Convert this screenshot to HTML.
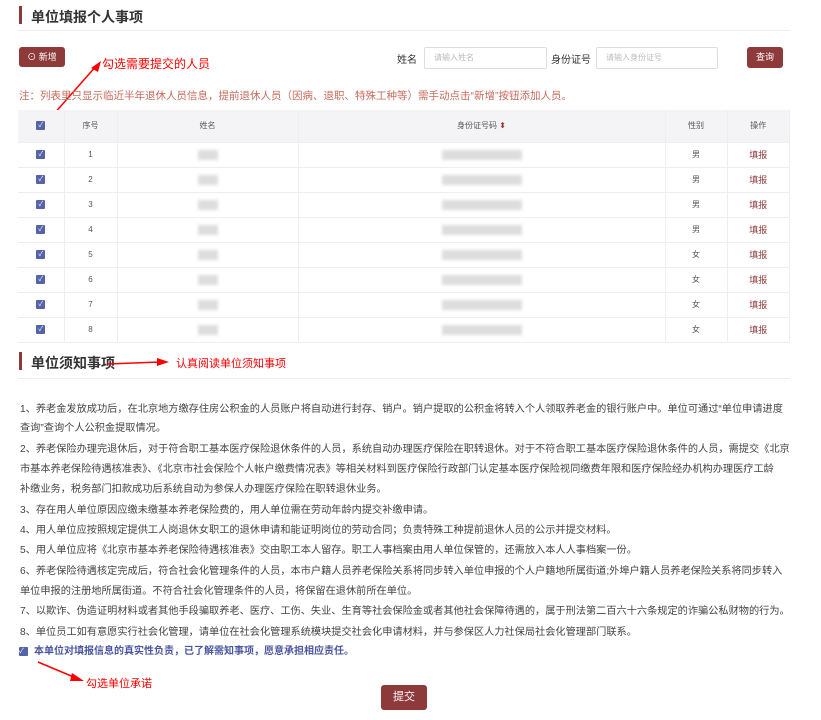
<!DOCTYPE html>
<html><head><meta charset="utf-8"><style>
*{margin:0;padding:0;box-sizing:border-box}
body{width:821px;height:720px;background:#fff;font-family:"Liberation Sans","Noto Sans CJK SC",sans-serif;color:#333;position:relative;overflow:hidden}
.abs{position:absolute;white-space:nowrap}
.bar{position:absolute;width:3px;height:18px;background:#8c3a3a}
.h{font-size:14px;font-weight:bold;color:#333}
.hr{position:absolute;left:18px;width:772px;height:1px;background:#eee}
.btn{position:absolute;background:#8f3a3a;color:#fff;border-radius:3px;font-size:9px;text-align:center}
.inp{position:absolute;border:1px solid #ddd;border-radius:2px;font-size:8px;color:#bbb;padding-left:9px;line-height:20px;height:22px}
.red{color:#f00;font-size:12px}
table{position:absolute;left:18px;top:110px;width:772px;border-collapse:collapse;font-size:8px;color:#555}
td,th{border-bottom:1px solid #eee;border-right:1px solid #eee;text-align:center;height:25px;font-weight:normal}
th{background:#f4f4f6;height:32px}
.cb{display:inline-block;width:9px;height:9px;background:#5563a8;border-radius:1px;color:#fff;font-size:7px;line-height:9px;vertical-align:middle}
.blur{display:inline-block;height:10px;background:#ddd;filter:blur(1.5px);vertical-align:middle}
.op{color:#8f3a3a;font-size:9px}
.n{position:absolute;left:20px;font-size:10.2px;color:#444;white-space:nowrap}
</style></head><body>
<div class="bar" style="left:19px;top:6px"></div>
<div class="abs h" style="left:31px;top:7px">单位填报个人事项</div>
<div class="hr" style="top:30px"></div>
<div class="btn" style="left:19px;top:47px;width:46px;height:20px;line-height:20px">⊙ 新增</div>
<div class="abs red" style="left:102px;top:55px">勾选需要提交的人员</div>
<svg class="abs" style="left:45px;top:60px" width="60" height="120"><line x1="52" y1="5" x2="8" y2="55" stroke="#f00" stroke-width="1.5"/><polygon points="56,1 46,8 53,12" fill="#f00"/></svg>
<div class="abs" style="left:397px;top:51px;font-size:10px">姓名</div>
<div class="inp" style="left:424px;top:47px;width:123px">请输入姓名</div>
<div class="abs" style="left:551px;top:51px;font-size:10px">身份证号</div>
<div class="inp" style="left:596px;top:47px;width:122px">请输入身份证号</div>
<div class="btn" style="left:747px;top:47px;width:36px;height:21px;line-height:21px">查询</div>
<div class="abs" style="left:19px;top:88px;font-size:10.5px;color:#c86b5a">注：列表里只显示临近半年退休人员信息，提前退休人员（因病、退职、特殊工种等）需手动点击“新增”按钮添加人员。</div>
<table>
<tr><th style="width:46px"><span class="cb">✓</span></th><th style="width:53px">序号</th><th style="width:181px">姓名</th><th style="width:367px">身份证号码 <span style="color:#8f3a3a">⬍</span></th><th style="width:62px">性别</th><th>操作</th></tr>
<tr><td><span class="cb">✓</span></td><td>1</td><td><span class="blur" style="width:20px"></span></td><td><span class="blur" style="width:80px"></span></td><td>男</td><td class="op">填报</td></tr>
<tr><td><span class="cb">✓</span></td><td>2</td><td><span class="blur" style="width:20px"></span></td><td><span class="blur" style="width:80px"></span></td><td>男</td><td class="op">填报</td></tr>
<tr><td><span class="cb">✓</span></td><td>3</td><td><span class="blur" style="width:20px"></span></td><td><span class="blur" style="width:80px"></span></td><td>男</td><td class="op">填报</td></tr>
<tr><td><span class="cb">✓</span></td><td>4</td><td><span class="blur" style="width:20px"></span></td><td><span class="blur" style="width:80px"></span></td><td>男</td><td class="op">填报</td></tr>
<tr><td><span class="cb">✓</span></td><td>5</td><td><span class="blur" style="width:20px"></span></td><td><span class="blur" style="width:80px"></span></td><td>女</td><td class="op">填报</td></tr>
<tr><td><span class="cb">✓</span></td><td>6</td><td><span class="blur" style="width:20px"></span></td><td><span class="blur" style="width:80px"></span></td><td>女</td><td class="op">填报</td></tr>
<tr><td><span class="cb">✓</span></td><td>7</td><td><span class="blur" style="width:20px"></span></td><td><span class="blur" style="width:80px"></span></td><td>女</td><td class="op">填报</td></tr>
<tr><td><span class="cb">✓</span></td><td>8</td><td><span class="blur" style="width:20px"></span></td><td><span class="blur" style="width:80px"></span></td><td>女</td><td class="op">填报</td></tr>
</table>
<div class="bar" style="left:19px;top:352px"></div>
<div class="abs h" style="left:31px;top:353px">单位须知事项</div>
<svg class="abs" style="left:105px;top:356px" width="65" height="14"><line x1="2" y1="8" x2="55" y2="6" stroke="#f00" stroke-width="1.5"/><polygon points="64,6 52,2 52,10" fill="#f00"/></svg>
<div class="abs red" style="left:176px;top:355px;font-size:11px">认真阅读单位须知事项</div>
<div class="hr" style="top:378px"></div>
<div class="n" style="top:400px">1、养老金发放成功后，在北京地方缴存住房公积金的人员账户将自动进行封存、销户。销户提取的公积金将转入个人领取养老金的银行账户中。单位可通过“单位申请进度</div>
<div class="n" style="top:419px">查询”查询个人公积金提取情况。</div>
<div class="n" style="top:440px">2、养老保险办理完退休后，对于符合职工基本医疗保险退休条件的人员，系统自动办理医疗保险在职转退休。对于不符合职工基本医疗保险退休条件的人员，需提交《北京</div>
<div class="n" style="top:460px">市基本养老保险待遇核准表》、《北京市社会保险个人帐户缴费情况表》等相关材料到医疗保险行政部门认定基本医疗保险视同缴费年限和医疗保险经办机构办理医疗工龄</div>
<div class="n" style="top:480px">补缴业务，税务部门扣款成功后系统自动为参保人办理医疗保险在职转退休业务。</div>
<div class="n" style="top:501px">3、存在用人单位原因应缴未缴基本养老保险费的，用人单位需在劳动年龄内提交补缴申请。</div>
<div class="n" style="top:521px">4、用人单位应按照规定提供工人岗退休女职工的退休申请和能证明岗位的劳动合同；负责特殊工种提前退休人员的公示并提交材料。</div>
<div class="n" style="top:541px">5、用人单位应将《北京市基本养老保险待遇核准表》交由职工本人留存。职工人事档案由用人单位保管的，还需放入本人人事档案一份。</div>
<div class="n" style="top:562px">6、养老保险待遇核定完成后，符合社会化管理条件的人员，本市户籍人员养老保险关系将同步转入单位申报的个人户籍地所属街道;外埠户籍人员养老保险关系将同步转入</div>
<div class="n" style="top:582px">单位申报的注册地所属街道。不符合社会化管理条件的人员，将保留在退休前所在单位。</div>
<div class="n" style="top:602px">7、以欺诈、伪造证明材料或者其他手段骗取养老、医疗、工伤、失业、生育等社会保险金或者其他社会保障待遇的，属于刑法第二百六十六条规定的诈骗公私财物的行为。</div>
<div class="n" style="top:623px">8、单位员工如有意愿实行社会化管理，请单位在社会化管理系统模块提交社会化申请材料，并与参保区人力社保局社会化管理部门联系。</div>
<div class="abs" style="left:19px;top:643px"><span class="cb">✓</span></div>
<div class="abs" style="left:34px;top:642px;font-size:10px;color:#4a55a0;font-weight:bold">本单位对填报信息的真实性负责，已了解需知事项，愿意承担相应责任。</div>
<svg class="abs" style="left:36px;top:660px" width="50" height="25"><line x1="2" y1="2" x2="40" y2="18" stroke="#f00" stroke-width="1.5"/><polygon points="48,21 36,13 34,21" fill="#f00"/></svg>
<div class="abs red" style="left:86px;top:675px;font-size:11px">勾选单位承诺</div>
<div class="btn" style="left:381px;top:685px;width:46px;height:25px;line-height:25px;font-size:11px">提交</div>
</body></html>
